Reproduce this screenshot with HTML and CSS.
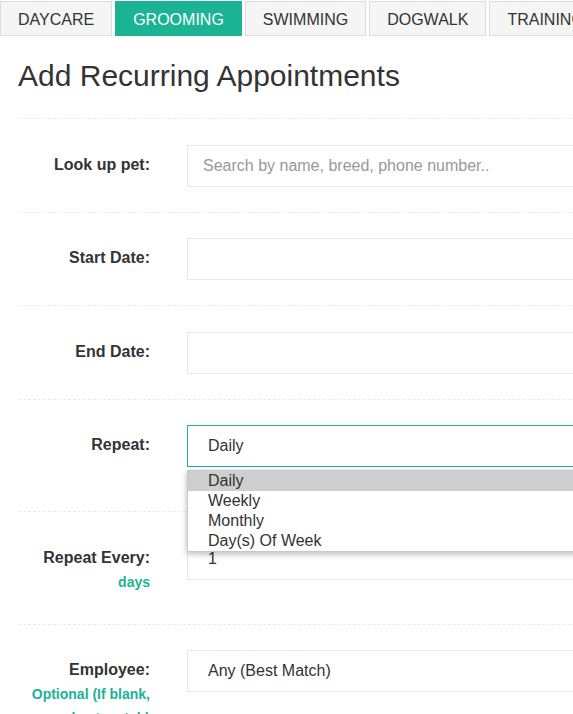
FILE: index.html
```html
<!DOCTYPE html>
<html lang="en">
<head>
<meta charset="utf-8">
<title>Add Recurring Appointments</title>
<link rel="stylesheet" href="styles.css">
</head>
<body>
<div class="page">
  <nav class="tabs">
    <a class="tab">DAYCARE</a>
    <a class="tab active">GROOMING</a>
    <a class="tab">SWIMMING</a>
    <a class="tab">DOGWALK</a>
    <a class="tab">TRAINING</a>
    <a class="tab">BOARDING</a>
  </nav>
  <main class="content">
    <h1 class="title">Add Recurring Appointments</h1>
    <div class="form">
      <div class="row">
        <div class="label"><span class="main">Look up pet:</span></div>
        <div class="field"><input class="control" type="text" placeholder="Search by name, breed, phone number.."></div>
      </div>
      <div class="row">
        <div class="label"><span class="main">Start Date:</span></div>
        <div class="field"><input class="control" type="text"></div>
      </div>
      <div class="row">
        <div class="label"><span class="main">End Date:</span></div>
        <div class="field"><input class="control" type="text"></div>
      </div>
      <div class="row tall">
        <div class="label"><span class="main">Repeat:</span></div>
        <div class="field has-menu">
          <div class="control select focused">Daily</div>
          <ul class="menu">
            <li class="option selected">Daily</li>
            <li class="option">Weekly</li>
            <li class="option">Monthly</li>
            <li class="option">Day(s) Of Week</li>
          </ul>
        </div>
      </div>
      <div class="row tall">
        <div class="label"><span class="main">Repeat Every:</span><span class="sub">days</span></div>
        <div class="field"><div class="control select">1</div></div>
      </div>
      <div class="row">
        <div class="label"><span class="main">Employee:</span><span class="sub">Optional (If blank,<br>best match)</span></div>
        <div class="field"><div class="control select">Any (Best Match)</div></div>
      </div>
    </div>
  </main>
</div>
</body>
</html>
```
FILE: styles.css
```css
html, body {
  margin: 0;
  padding: 0;
  background: #ffffff;
  overflow: hidden;
}

body {
  font-family: "Liberation Sans", Arial, sans-serif;
  color: #333333;
}

.page {
  width: 900px;
}

.tabs {
  display: flex;
  gap: 3px;
  padding-top: 1px;
}

.tab {
  display: block;
  box-sizing: border-box;
  height: 35px;
  line-height: 35px;
  padding: 0 17px;
  border: 1px solid #dddddd;
  background: #f5f5f5;
  color: #333333;
  font-size: 16px;
  white-space: nowrap;
}

.tab.active {
  background: #1ab394;
  border-color: #1ab394;
  color: #ffffff;
}

.content {
  padding-left: 18px;
}

.title {
  margin: 22px 0 24px;
  font-size: 30px;
  line-height: 36px;
  font-weight: normal;
  color: #333333;
}

.row {
  display: grid;
  grid-template-columns: 132px 1fr;
  column-gap: 37px;
  align-items: start;
  border-top: 1px dashed #e7eaec;
  padding: 25.5px 0 25px;
}

.label {
  box-sizing: border-box;
  padding-top: 8px;
  text-align: right;
  font-weight: bold;
  line-height: 24px;
}

.row.tall .label {
  min-height: 61px;
}

.main {
  display: block;
  font-size: 16px;
}

.sub {
  display: block;
  font-size: 14px;
  color: #1ab394;
}

.field {
  position: relative;
}

.control {
  display: block;
  box-sizing: border-box;
  width: 100%;
  height: 42px;
  margin: 0;
  padding: 0 15px;
  border: 1px solid #e5e6e7;
  border-radius: 0;
  background: #ffffff;
  font-family: "Liberation Sans", Arial, sans-serif;
  font-size: 16px;
  line-height: 40px;
  color: #333333;
  outline: none;
}

.control::placeholder {
  color: #999999;
}

.select {
  padding-left: 20px;
}

.select.focused {
  border-color: #1ab394;
}

.menu {
  position: absolute;
  left: 0;
  right: 0;
  top: 45px;
  margin: 0;
  padding: 0;
  list-style: none;
  background: #ffffff;
  border: 1px solid #c8c8c8;
  box-shadow: 0 2px 6px rgba(0, 0, 0, 0.28);
  z-index: 5;
}

.option {
  padding-left: 20px;
  height: 20px;
  line-height: 20px;
  font-size: 16px;
  color: #333333;
}

.option.selected {
  background: #cecece;
}
```
